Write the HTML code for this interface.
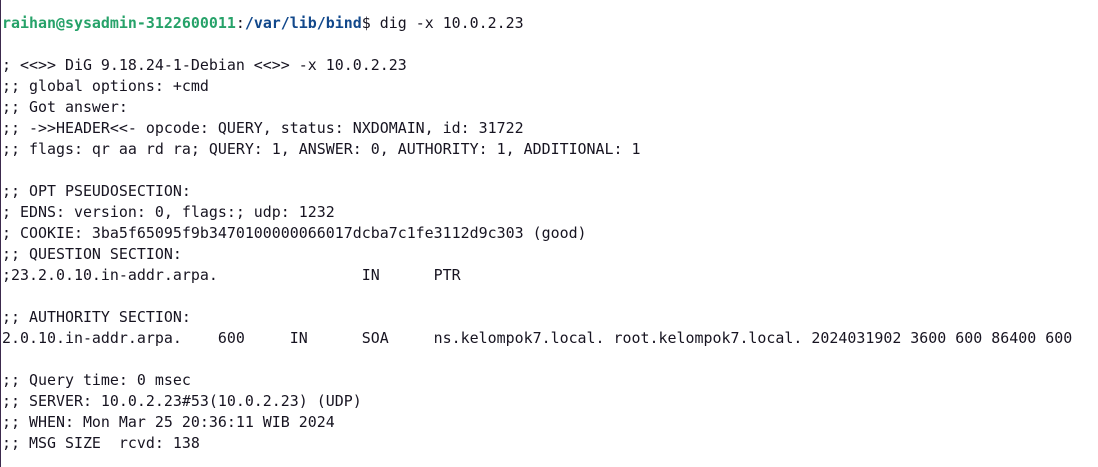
<!DOCTYPE html>
<html><head><style>
html,body{margin:0;padding:0;background:#fff;}
body{width:1098px;height:467px;overflow:hidden;position:relative;border-left:1px solid #3c2a4d;box-sizing:border-box;}
pre{margin:0;position:absolute;left:1px;top:13px;font-family:"DejaVu Sans Mono","Liberation Mono",monospace;font-size:14.95px;line-height:21.02px;color:#171421;tab-size:8;-moz-tab-size:8;}
.g{color:#26a269;font-weight:bold}.b{color:#12488b;font-weight:bold}
</style></head><body><pre><span class="g">raihan@sysadmin-3122600011</span>:<span class="b">/var/lib/bind</span>$ dig -x 10.0.2.23

; &lt;&lt;&gt;&gt; DiG 9.18.24-1-Debian &lt;&lt;&gt;&gt; -x 10.0.2.23
;; global options: +cmd
;; Got answer:
;; -&gt;&gt;HEADER&lt;&lt;- opcode: QUERY, status: NXDOMAIN, id: 31722
;; flags: qr aa rd ra; QUERY: 1, ANSWER: 0, AUTHORITY: 1, ADDITIONAL: 1

;; OPT PSEUDOSECTION:
; EDNS: version: 0, flags:; udp: 1232
; COOKIE: 3ba5f65095f9b3470100000066017dcba7c1fe3112d9c303 (good)
;; QUESTION SECTION:
;23.2.0.10.in-addr.arpa.		IN	PTR

;; AUTHORITY SECTION:
2.0.10.in-addr.arpa.	600	IN	SOA	ns.kelompok7.local. root.kelompok7.local. 2024031902 3600 600 86400 600

;; Query time: 0 msec
;; SERVER: 10.0.2.23#53(10.0.2.23) (UDP)
;; WHEN: Mon Mar 25 20:36:11 WIB 2024
;; MSG SIZE  rcvd: 138
</pre></body></html>
